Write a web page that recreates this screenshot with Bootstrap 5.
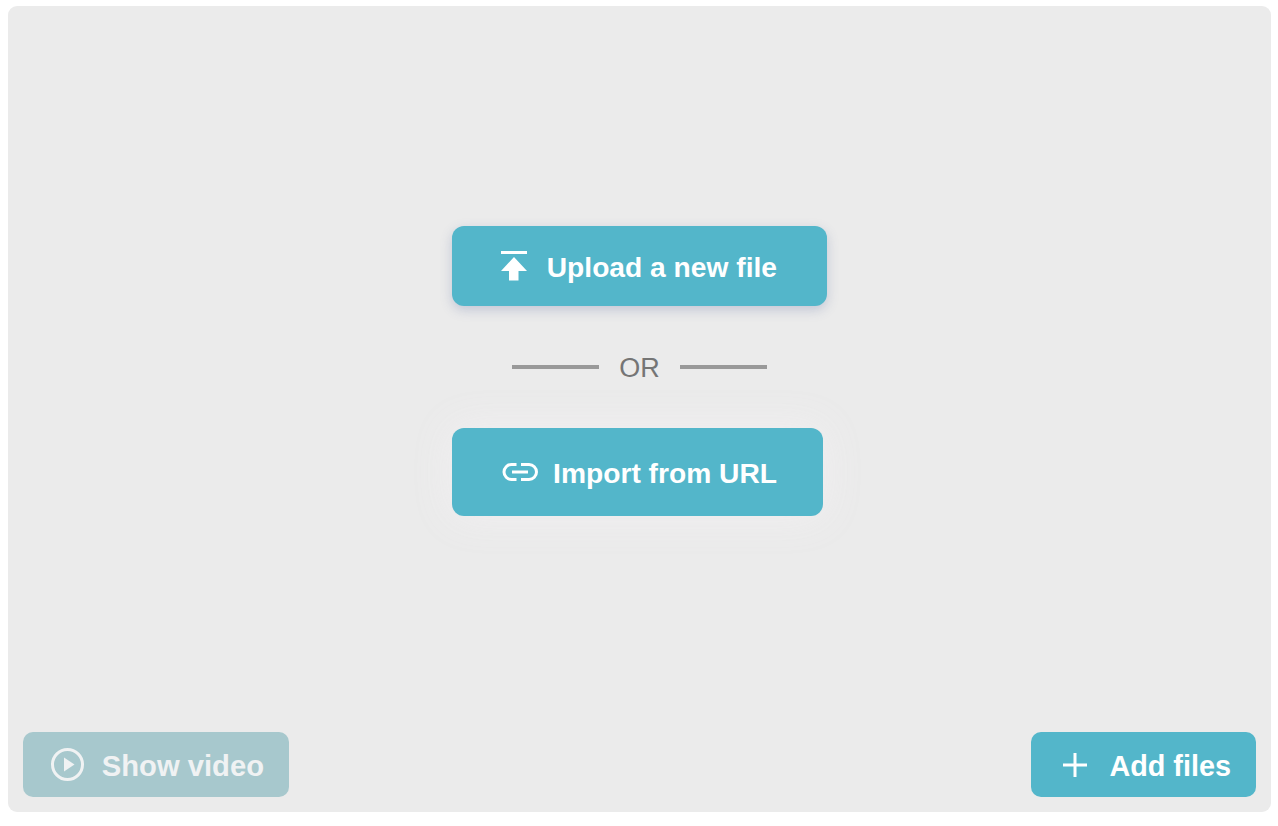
<!DOCTYPE html>
<html lang="en">
<head>
<meta charset="utf-8">
<title>Upload</title>
<link href="https://cdn.jsdelivr.net/npm/bootstrap@5.3.0/dist/css/bootstrap.min.css" rel="stylesheet">
<style>
html,body{height:100%;}
body{background:#fff;font-family:"Liberation Sans",Arial,sans-serif;padding:6px 7px 14px 8px;}
.drop-panel{height:806px;background:#ebebeb;border-radius:9px;padding:4px 15px 15px;}
.stack{width:375px;}
.act-btn{background:#53b6ca;color:#fff;border:0;font-weight:700;}
.act-btn:hover,.act-btn:focus,.act-btn:active{background:#53b6ca!important;color:#fff!important;}
.btn-label{position:relative;top:2px;}
.btn-upload .btn-label,.btn-import .btn-label{top:1px;}
.btn-upload{width:375px;height:80px;border-radius:12px;font-size:28.2px;box-shadow:0 4px 12px rgba(70,90,150,.25);padding:0 50px 0 49px;}
.btn-import{width:371px;height:88px;border-radius:12px;font-size:28.2px;box-shadow:0 0 40px rgba(242,240,242,.9);padding:0 46px 0 50px;}
.or-row{height:122px;width:255px;}
.or-line{width:87px;height:4px;background:#999;}
.or-text{font-size:27px;color:#757575;line-height:1;position:relative;top:1px;}
.btn-foot{height:65px;border-radius:10px;font-size:29px;}
.btn-video{width:266px;background:#a7c8cd;color:#f0f2f3;padding:0 25px 0 28px;}
.btn-video:disabled{background:#a7c8cd;color:#f0f2f3;opacity:1;}
.btn-video .btn-label{font-size:29.2px;}
.btn-add{width:225px;padding:0 25px 0 32px;}
.btn-add .btn-label{font-size:28.8px;}
</style>
</head>
<body>
<div class="drop-panel d-flex flex-column">
  <div class="flex-grow-1 d-flex align-items-center justify-content-center">
    <div class="stack d-flex flex-column">
      <button type="button" class="btn act-btn btn-upload d-flex align-items-center justify-content-between">
        <svg width="26" height="30" viewBox="0 0 26 30" aria-hidden="true"><rect x="0" y="0" width="26" height="3" fill="#fff"/><path d="M13 6 L26 20 H17.500 V29.500 H8 V20 H0 Z" fill="#fff"/></svg>
        <span class="btn-label">Upload a new file</span>
      </button>
      <div class="or-row align-self-center d-flex align-items-center justify-content-between">
        <span class="or-line"></span><span class="or-text">OR</span><span class="or-line"></span>
      </div>
      <button type="button" class="btn act-btn btn-import d-flex align-items-center justify-content-between">
        <svg width="37" height="20" viewBox="0 0 37 20" fill="none" stroke="#fff" stroke-width="3" aria-hidden="true"><path d="M14.500 2.500 H9.500 A7.500 7.500 0 0 0 9.500 17.500 H14.500"/><path d="M19 2.500 H27 A7.500 7.500 0 0 1 27 17.500 H19"/><path d="M10 10 H26"/></svg>
        <span class="btn-label">Import from URL</span>
      </button>
    </div>
  </div>
  <div class="d-flex justify-content-between">
    <button type="button" class="btn act-btn btn-foot btn-video d-flex align-items-center justify-content-between" disabled>
      <svg width="33" height="33" viewBox="0 0 33 33" aria-hidden="true"><circle cx="16.500" cy="16.500" r="15" fill="none" stroke="#f0f2f3" stroke-width="3"/><path d="M13 9.500 L23.500 16.500 L13 23.500 Z" fill="#f0f2f3"/></svg>
      <span class="btn-label">Show video</span>
    </button>
    <button type="button" class="btn act-btn btn-foot btn-add d-flex align-items-center justify-content-between">
      <svg width="24" height="24" viewBox="0 0 24 24" aria-hidden="true"><path d="M12 0 V24 M0 12 H24" stroke="#fff" stroke-width="3"/></svg>
      <span class="btn-label">Add files</span>
    </button>
  </div>
</div>
<script src="https://cdn.jsdelivr.net/npm/bootstrap@5.3.0/dist/js/bootstrap.bundle.min.js"></script>
</body>
</html>
